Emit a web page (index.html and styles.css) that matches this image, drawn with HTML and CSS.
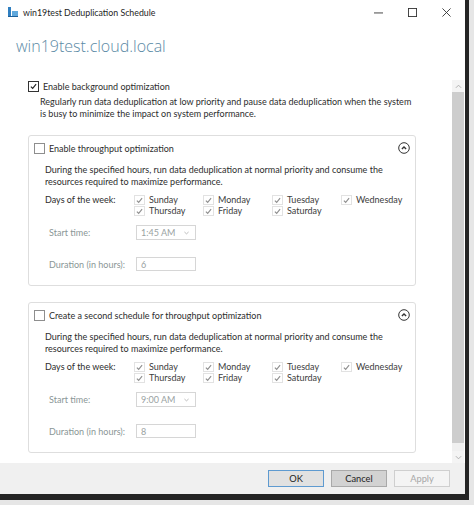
FILE: index.html
```html
<!DOCTYPE html>
<html lang="en">
<head>
  <meta charset="UTF-8" />
  <title>win19test Deduplication Schedule</title>
  <link rel="stylesheet" href="styles.css">
</head>
<body>
  <div class="window">
    <header class="titlebar">
      <svg class="app-icon" viewBox="0 0 12 12">
        <rect x="1" y="1" width="3" height="9" fill="#2f7fc1"/>
        <rect x="5" y="5" width="6" height="5" fill="#5fa8dc"/>
        <rect x="1" y="10" width="10" height="1" fill="#1d5f99"/>
      </svg>
      <span class="title">win19test Deduplication Schedule</span>
      <div class="controls">
        <svg viewBox="0 0 10 10"><path d="M0 5.5h10"/></svg>
        <svg viewBox="0 0 10 10"><rect x="0.5" y="0.5" width="9" height="9"/></svg>
        <svg viewBox="0 0 10 10"><path d="M0.5 0.5l9 9M9.5 0.5l-9 9"/></svg>
      </div>
    </header>

    <h1 class="heading">win19test.cloud.local</h1>

    <div class="panel">
      <div class="scroll">
        <label class="check-row">
          <span class="cb on"><svg viewBox="0 0 11 11"><path d="M2.3 5.6l2.2 2.3 4.2-5.2"/></svg></span>
          Enable background optimization
        </label>
        <p class="desc top-desc">Regularly run data deduplication at low priority and pause data deduplication when the system<br>is busy to minimize the impact on system performance.</p>

        <!-- first schedule -->
        <section class="group">
          <div class="group-head">
            <label class="check-row">
              <span class="cb"></span>
              Enable throughput optimization
            </label>
            <span class="collapse"><svg viewBox="0 0 12 12"><circle cx="6" cy="6" r="5.3"/><path d="M3.9 7l2.1-2 2.1 2"/></svg></span>
          </div>
          <p class="desc">During the specified hours, run data deduplication at normal priority and consume the<br>resources required to maximize performance.</p>
          <div class="days">
            <span class="days-label">Days of the week:</span>
            <div class="days-grid">
              <span class="day"><span class="cb dis"><svg viewBox="0 0 11 11"><path d="M2.3 5.6l2.2 2.3 4.2-5.2"/></svg></span>Sunday</span>
              <span class="day"><span class="cb dis"><svg viewBox="0 0 11 11"><path d="M2.3 5.6l2.2 2.3 4.2-5.2"/></svg></span>Monday</span>
              <span class="day"><span class="cb dis"><svg viewBox="0 0 11 11"><path d="M2.3 5.6l2.2 2.3 4.2-5.2"/></svg></span>Tuesday</span>
              <span class="day"><span class="cb dis"><svg viewBox="0 0 11 11"><path d="M2.3 5.6l2.2 2.3 4.2-5.2"/></svg></span>Wednesday</span>
              <span class="day"><span class="cb dis"><svg viewBox="0 0 11 11"><path d="M2.3 5.6l2.2 2.3 4.2-5.2"/></svg></span>Thursday</span>
              <span class="day"><span class="cb dis"><svg viewBox="0 0 11 11"><path d="M2.3 5.6l2.2 2.3 4.2-5.2"/></svg></span>Friday</span>
              <span class="day"><span class="cb dis"><svg viewBox="0 0 11 11"><path d="M2.3 5.6l2.2 2.3 4.2-5.2"/></svg></span>Saturday</span>
            </div>
          </div>
          <div class="field start">
            <span class="field-label">Start time:</span>
            <span class="select">1:45 AM<svg viewBox="0 0 6 4"><path d="M0.5 0.8l2.5 2.2 2.5-2.2"/></svg></span>
          </div>
          <div class="field duration">
            <span class="field-label">Duration (in hours):</span>
            <span class="input">6</span>
          </div>
        </section>

        <!-- second schedule -->
        <section class="group">
          <div class="group-head">
            <label class="check-row">
              <span class="cb"></span>
              Create a second schedule for throughput optimization
            </label>
            <span class="collapse"><svg viewBox="0 0 12 12"><circle cx="6" cy="6" r="5.3"/><path d="M3.9 7l2.1-2 2.1 2"/></svg></span>
          </div>
          <p class="desc">During the specified hours, run data deduplication at normal priority and consume the<br>resources required to maximize performance.</p>
          <div class="days">
            <span class="days-label">Days of the week:</span>
            <div class="days-grid">
              <span class="day"><span class="cb dis"><svg viewBox="0 0 11 11"><path d="M2.3 5.6l2.2 2.3 4.2-5.2"/></svg></span>Sunday</span>
              <span class="day"><span class="cb dis"><svg viewBox="0 0 11 11"><path d="M2.3 5.6l2.2 2.3 4.2-5.2"/></svg></span>Monday</span>
              <span class="day"><span class="cb dis"><svg viewBox="0 0 11 11"><path d="M2.3 5.6l2.2 2.3 4.2-5.2"/></svg></span>Tuesday</span>
              <span class="day"><span class="cb dis"><svg viewBox="0 0 11 11"><path d="M2.3 5.6l2.2 2.3 4.2-5.2"/></svg></span>Wednesday</span>
              <span class="day"><span class="cb dis"><svg viewBox="0 0 11 11"><path d="M2.3 5.6l2.2 2.3 4.2-5.2"/></svg></span>Thursday</span>
              <span class="day"><span class="cb dis"><svg viewBox="0 0 11 11"><path d="M2.3 5.6l2.2 2.3 4.2-5.2"/></svg></span>Friday</span>
              <span class="day"><span class="cb dis"><svg viewBox="0 0 11 11"><path d="M2.3 5.6l2.2 2.3 4.2-5.2"/></svg></span>Saturday</span>
            </div>
          </div>
          <div class="field start">
            <span class="field-label">Start time:</span>
            <span class="select">9:00 AM<svg viewBox="0 0 6 4"><path d="M0.5 0.8l2.5 2.2 2.5-2.2"/></svg></span>
          </div>
          <div class="field duration">
            <span class="field-label">Duration (in hours):</span>
            <span class="input">8</span>
          </div>
        </section>
      </div>

      <div class="scrollbar">
        <span class="arrow"><svg viewBox="0 0 8 5"><path d="M1 4l3-3 3 3"/></svg></span>
        <span class="thumb"></span>
        <span class="track"></span>
        <span class="arrow"><svg viewBox="0 0 8 5"><path d="M1 1l3 3 3-3"/></svg></span>
      </div>
    </div>

    <footer class="footer">
      <button class="btn default">OK</button>
      <button class="btn hover">Cancel</button>
      <button class="btn" disabled>Apply</button>
    </footer>
  </div>
</body>
</html>
```

FILE: styles.css
```css
body {
  margin: 0;
  background: #e6e6e6;
  font-family: Lato, "Open Sans", sans-serif;
  font-size: 9px;
  color: #2d2d2d;
}
svg {
  display: block;
}

.window {
  width: 465px;
  height: 494px;
  background: #fff;
  border-right: 4px solid #242424;
  border-bottom: 6px solid #242424;
  display: flex;
  flex-direction: column;
}

/* title bar */
.titlebar {
  height: 24px;
  flex-shrink: 0;
  display: flex;
  align-items: center;
  padding-left: 7px;
}
.app-icon {
  width: 12px;
  height: 12px;
  margin-right: 4px;
}
.title {
  font-size: 8.8px;
  color: #1e1e1e;
}
.controls {
  margin-left: auto;
  display: flex;
  gap: 25px;
  padding-right: 14px;
}
.controls svg {
  width: 9px;
  height: 9px;
  fill: none;
  stroke: #333;
  stroke-width: 1;
}

.heading {
  margin: 0;
  height: 56px;
  flex-shrink: 0;
  padding: 10px 0 0 16px;
  box-sizing: border-box;
  font-family: "Open Sans", sans-serif;
  font-size: 16px;
  font-weight: 300;
  color: #5b8aa5;
  line-height: 24px;
}

/* scrolling panel */
.panel {
  flex: 1;
  display: flex;
  min-height: 0;
}
.scroll {
  flex: 1;
  padding-left: 28px;
  overflow: hidden;
}
.scrollbar {
  width: 12px;
  margin-right: 1px;
  display: flex;
  flex-direction: column;
}
.scrollbar .arrow {
  height: 12px;
  display: flex;
  align-items: center;
  justify-content: center;
  background: #f4f4f4;
}
.scrollbar .arrow svg {
  width: 7px;
  height: 5px;
  fill: none;
  stroke: #a8a8a8;
}
.thumb {
  height: 351px;
  background: #cdcdcd;
}
.track {
  flex: 1;
  background: #f0f0f0;
}

/* checkboxes */
.check-row {
  display: flex;
  align-items: center;
  gap: 4px;
  height: 12px;
}
.cb {
  width: 11px;
  height: 11px;
  box-sizing: border-box;
  border: 1px solid #8e8e8e;
  background: #fff;
  flex-shrink: 0;
}
.cb svg {
  width: 9px;
  height: 9px;
  fill: none;
  stroke-width: 1.4;
}
.cb.on {
  border-color: #333;
}
.cb.on svg {
  stroke: #222;
}
.cb.dis {
  border-color: #e2e2e2;
}
.cb.dis svg {
  stroke: #8f8f8f;
}

.desc {
  margin: 0;
  line-height: 12px;
  white-space: nowrap;
}
.top-desc {
  margin: 4px 0 0 12px;
}

/* schedule groups */
.group {
  width: 388px;
  height: 151px;
  box-sizing: border-box;
  border: 1px solid #dedede;
  border-radius: 3px;
  margin-top: 15px;
  padding: 6px 5px 0 5px;
}
.group + .group {
  margin-top: 16px;
}
.group-head {
  display: flex;
  align-items: center;
  justify-content: space-between;
}
.collapse svg {
  width: 12px;
  height: 12px;
  fill: none;
  stroke: #333;
  stroke-width: 1;
}
.collapse svg path {
  stroke-width: 1.4;
}
.group .desc {
  margin: 10px 0 0 11px;
}

.days {
  display: flex;
  margin: 6px 0 0 11px;
}
.days-label {
  width: 92px;
  line-height: 11px;
}
.days-grid {
  display: grid;
  grid-template-columns: repeat(4, 69px);
}
.day {
  display: flex;
  align-items: center;
  gap: 4px;
  height: 11px;
  color: #3c3c3c;
}
.day .cb {
  width: 11px;
  height: 10px;
}

.field {
  display: flex;
  align-items: center;
  margin-left: 15px;
  color: #8a9696;
}
.field.start {
  margin-top: 9px;
}
.field.duration {
  margin-top: 17px;
}
.field-label {
  width: 87px;
}
.select,
.input {
  width: 60px;
  height: 15px;
  box-sizing: border-box;
  border: 1px solid #d6d6d6;
  display: flex;
  align-items: center;
  padding-left: 4px;
  color: #9aa2a2;
}
.select svg {
  width: 5px;
  height: 4px;
  margin-left: auto;
  margin-right: 6px;
  fill: none;
  stroke: #b0b0b0;
}
.input {
  height: 14px;
}

/* footer buttons */
.footer {
  height: 31px;
  flex-shrink: 0;
  background: #f0f0f0;
  display: flex;
  align-items: center;
  justify-content: flex-end;
  gap: 7px;
  padding-right: 15px;
}
.btn {
  width: 56px;
  height: 17px;
  padding: 0;
  font-family: inherit;
  font-size: 9.3px;
  color: #222;
  background: #e1e1e1;
  border: 1px solid #adadad;
}
.btn.default {
  border-color: #5e9ad0;
}
.btn.hover {
  background: #d2d2d2;
  border-color: #a9a9a9;
}
.btn:disabled {
  background: #f4f4f4;
  border-color: #cfcfcf;
  color: #a8a8a8;
}
```
